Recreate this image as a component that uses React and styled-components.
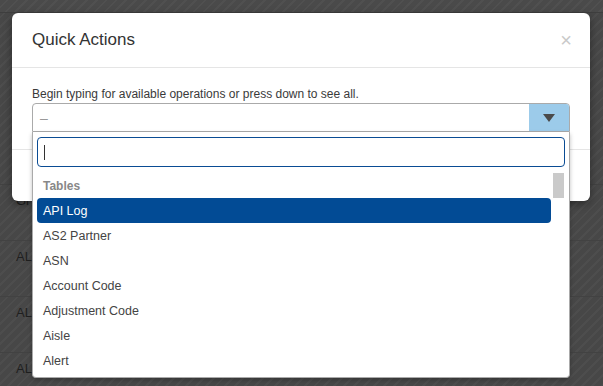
import React from 'react'
import styled, { createGlobalStyle } from 'styled-components'

const GlobalStyle = createGlobalStyle`
  html, body {
    margin: 0;
    padding: 0;
  }
  body {
    font-family: "Liberation Sans", Arial, sans-serif;
    color: #333;
  }
`

const tables = ['AS2 Partner', 'ASN', 'Account Code', 'Adjustment Code', 'Aisle', 'Alert']

const backRows = ['Gr', 'AL', 'AL', 'AL']

function App() {
  return (
    <>
      <GlobalStyle />
      <Page>
        <TopStrip />
        <Spacer />
        {backRows.map((t, i) => (
          <BackRow key={i}>{t}</BackRow>
        ))}

        <Modal>
          <Header>
            <Title>Quick Actions</Title>
            <Close>×</Close>
          </Header>
          <Body>
            <Label>Begin typing for available operations or press down to see all.</Label>
            <SelectWrap>
              <Select>
                <Placeholder>–</Placeholder>
                <ArrowBtn>
                  <svg width="12" height="8" viewBox="0 0 12 8">
                    <path d="M0 0 L12 0 L6 8 Z" fill="#4a4a4a" />
                  </svg>
                </ArrowBtn>
              </Select>
              <Dropdown>
                <SearchBox>
                  <Caret />
                </SearchBox>
                <ListArea>
                  <List>
                    <GroupLabel>Tables</GroupLabel>
                    <Option $active>API Log</Option>
                    {tables.map((t) => (
                      <Option key={t}>{t}</Option>
                    ))}
                  </List>
                  <ScrollTrack>
                    <ScrollThumb />
                  </ScrollTrack>
                </ListArea>
              </Dropdown>
            </SelectWrap>
          </Body>
          <Footer />
        </Modal>
      </Page>
    </>
  )
}

const Page = styled.div`
  position: relative;
  width: 603px;
  height: 386px;
  overflow: hidden;
  background-color: #474747;
  background-image: repeating-linear-gradient(
    -45deg,
    rgba(255, 255, 255, 0.035) 0px,
    rgba(255, 255, 255, 0.035) 2px,
    transparent 2px,
    transparent 7px
  );
`

const TopStrip = styled.div`
  height: 12px;
  border-bottom: 1px solid #3e3e3e;
  background: rgba(255, 255, 255, 0.02);
`

const Spacer = styled.div`
  height: 171px;
  border-bottom: 1px solid #424242;
`

const BackRow = styled.div`
  height: 56px;
  box-sizing: border-box;
  border-bottom: 1px solid #424242;
  padding: 9px 0 0 16px;
  font-size: 13px;
  line-height: 14px;
  color: #1f1f1f;
`

const Modal = styled.div`
  position: absolute;
  top: 13px;
  left: 12px;
  width: 578px;
  background: #fff;
  border-radius: 6px;
  box-shadow: 0 3px 9px rgba(0, 0, 0, 0.4);
`

const Header = styled.div`
  height: 54px;
  padding: 0 20px;
  display: flex;
  align-items: center;
  justify-content: space-between;
  border-bottom: 1px solid #e5e5e5;
`

const Title = styled.h4`
  margin: 0;
  font-size: 17px;
  font-weight: normal;
  color: #333;
`

const Close = styled.span`
  font-size: 20px;
  line-height: 1;
  color: #c9c9c9;
  margin-right: -2px;
`

const Body = styled.div`
  padding: 19px 20px 17px 20px;
`

const Label = styled.div`
  font-size: 12px;
  line-height: 15px;
  color: #3a3a3a;
  margin-bottom: 1px;
`

const SelectWrap = styled.div`
  position: relative;
`

const Select = styled.div`
  height: 29px;
  box-sizing: border-box;
  border: 1px solid #aaa;
  border-radius: 4px 4px 0 0;
  display: flex;
  align-items: center;
  overflow: hidden;
`

const Placeholder = styled.span`
  flex: 1;
  padding-left: 7px;
  font-size: 14px;
  color: #999;
`

const ArrowBtn = styled.div`
  width: 40px;
  height: 100%;
  background: #9ccbea;
  display: flex;
  align-items: center;
  justify-content: center;
`

const Dropdown = styled.div`
  position: absolute;
  top: 29px;
  left: 0;
  right: 0;
  height: 246px;
  box-sizing: border-box;
  background: #fff;
  border: 1px solid #aaa;
  border-top: none;
  border-radius: 0 0 4px 4px;
  box-shadow: 0 2px 4px rgba(0, 0, 0, 0.25);
  padding: 5px 4px 0 4px;
  display: flex;
  flex-direction: column;
  z-index: 2;
`

const SearchBox = styled.div`
  height: 30px;
  box-sizing: border-box;
  border: 1px solid #0a4c94;
  border-radius: 4px;
  display: flex;
  align-items: center;
  padding-left: 6px;
`

const Caret = styled.span`
  width: 1px;
  height: 15px;
  background: #333;
`

const ListArea = styled.div`
  flex: 1;
  margin-top: 6px;
  display: flex;
  overflow: hidden;
`

const List = styled.div`
  flex: 1;
`

const GroupLabel = styled.div`
  height: 25px;
  line-height: 27px;
  padding-left: 6px;
  font-size: 12px;
  font-weight: bold;
  color: #888;
`

const Option = styled.div`
  height: 25px;
  line-height: 26px;
  padding-left: 6px;
  font-size: 12.5px;
  border-radius: 4px;
  color: ${(p) => (p.$active ? '#fff' : '#444')};
  background: ${(p) => (p.$active ? '#024b95' : 'transparent')};
`

const ScrollTrack = styled.div`
  width: 14px;
  display: flex;
  justify-content: center;
`

const ScrollThumb = styled.div`
  width: 11px;
  height: 25px;
  background: #cacaca;
`

const Footer = styled.div`
  height: 51px;
  border-top: 1px solid #e5e5e5;
`

export default App
